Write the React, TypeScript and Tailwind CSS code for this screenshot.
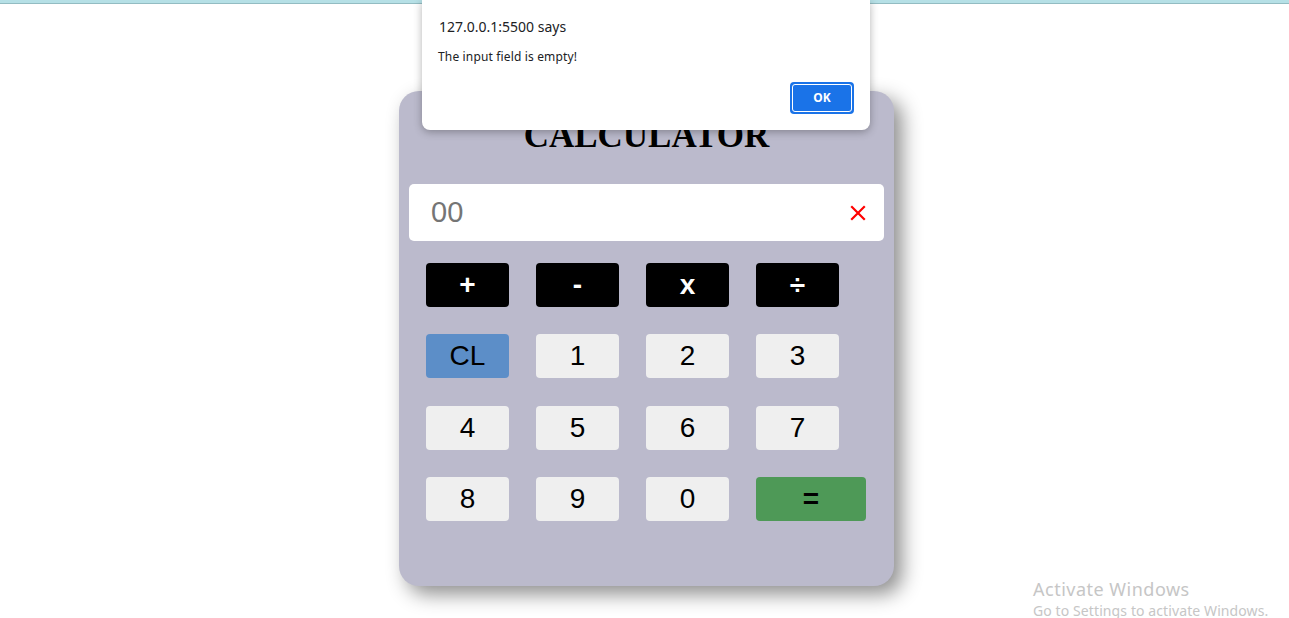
import React from "react";

const btnBase =
  "h-[44px] rounded-[4px] flex items-center justify-center text-[28px] leading-none";

function NumBtn({ label }: { label: string }) {
  return (
    <div className={`${btnBase} w-[83px] bg-[#efefef] text-black`}>{label}</div>
  );
}

function OpBtn({ label }: { label: string }) {
  return (
    <div className={`${btnBase} w-[83px] bg-black text-white font-bold`}>{label}</div>
  );
}

export default function App() {
  return (
    <div
      className="relative min-h-[618px] w-full bg-white overflow-hidden"
      style={{ fontFamily: '"Liberation Sans", Arial, sans-serif' }}
    >
      <div className="h-[4px] w-full bg-[#b6e0e6] border-b border-[#93bcc2]" />

      <div className="flex justify-center pl-[4px]">
        <div className="mt-[87px] w-[495px] rounded-[20px] bg-[#bbbacc] px-[10px] pt-[25px] pb-[65px] shadow-[8px_8px_20px_rgba(0,0,0,0.45)]">
          <div
            className="text-center text-[35px] leading-[40px] font-bold text-black"
            style={{ fontFamily: '"Liberation Serif", "Times New Roman", serif' }}
          >
            CALCULATOR
          </div>

          <div className="mt-[28px] h-[57px] rounded-[5px] bg-white flex items-center justify-between pl-[22px] pr-[18px]">
            <span className="text-[29px] text-[#757575] leading-none">00</span>
            <svg width="16" height="16" viewBox="0 0 16 16">
              <path d="M2 2 L14 14 M14 2 L2 14" stroke="#ff0000" strokeWidth="2.2" strokeLinecap="square" />
            </svg>
          </div>

          <div className="mt-[22px] pl-[17px] flex gap-[27px]">
            <OpBtn label="+" />
            <OpBtn label="-" />
            <OpBtn label="x" />
            <OpBtn label="÷" />
          </div>
          <div className="mt-[27px] pl-[17px] flex gap-[27px]">
            <div className={`${btnBase} w-[83px] bg-[#5c8ec8] text-black`}>CL</div>
            <NumBtn label="1" />
            <NumBtn label="2" />
            <NumBtn label="3" />
          </div>
          <div className="mt-[28px] pl-[17px] flex gap-[27px]">
            <NumBtn label="4" />
            <NumBtn label="5" />
            <NumBtn label="6" />
            <NumBtn label="7" />
          </div>
          <div className="mt-[27px] pl-[17px] flex gap-[27px]">
            <NumBtn label="8" />
            <NumBtn label="9" />
            <NumBtn label="0" />
            <div className={`${btnBase} w-[110px] bg-[#4e9957] text-black font-bold`}>=</div>
          </div>
        </div>
      </div>

      {/* Alert dialog */}
      <div
        className="absolute left-[422px] top-0 w-[448px] h-[130px] bg-white rounded-b-[8px] shadow-[0_2px_8px_rgba(0,0,0,0.3)]"
        style={{ fontFamily: '"Noto Sans", "Open Sans", sans-serif' }}
      >
        <div className="pl-[17px] pt-[17px] text-[14px] leading-[20px] text-[#202124]">
          127.0.0.1:5500 says
        </div>
        <div className="pl-[16px] pt-[12px] text-[12px] leading-[16px] text-[#202124] tracking-[0.15px]">
          The input field is empty!
        </div>
        <div className="absolute right-[16px] bottom-[16px] w-[64px] h-[32px] rounded-[4px] bg-[#1a73e8] p-[2px]">
          <div className="w-full h-full rounded-[3px] border border-white flex items-center justify-center text-white text-[12px] font-bold">
            OK
          </div>
        </div>
      </div>

      {/* Activate Windows watermark */}
      <div
        className="absolute left-[1033px] top-[577px] text-[#c6c6c6]"
        style={{ fontFamily: '"Noto Sans", "Open Sans", sans-serif' }}
      >
        <div className="text-[18px] leading-[24px] tracking-[0.5px]">Activate Windows</div>
        <div className="text-[14px] leading-[20px] whitespace-nowrap tracking-[0.1px]">Go to Settings to activate Windows.</div>
      </div>
    </div>
  );
}
